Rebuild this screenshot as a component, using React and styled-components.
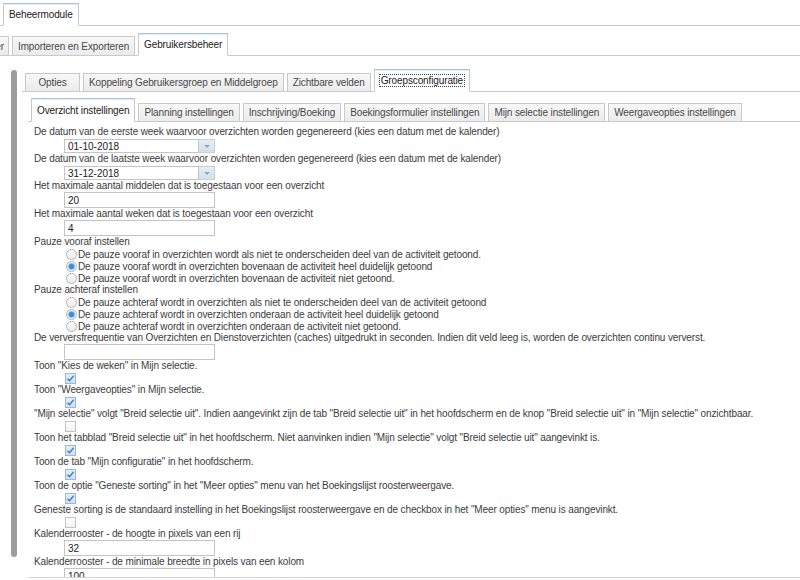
import React from 'react';
import styled, { createGlobalStyle } from 'styled-components';

const GlobalStyle = createGlobalStyle`
  body {
    margin: 0;
    background: #fff;
    font-family: "Liberation Sans", Arial, sans-serif;
    font-size: 10px;
    letter-spacing: -0.12px;
    color: #3c3c3c;
  }
`;

const Page = styled.div`
  width: 800px;
  height: 580px;
  overflow: hidden;
  background: #fff;
`;

const TabStrip = styled.div`
  display: flex;
  align-items: flex-end;
  gap: 3px;
  height: ${p => p.$height}px;
  padding-left: ${p => p.$indent || 0}px;
  margin-top: ${p => p.$top || 0}px;
  border-bottom: 1px solid #cacaca;
`;

const Tab = styled.div`
  box-sizing: border-box;
  display: flex;
  align-items: center;
  justify-content: center;
  flex-shrink: 0;
  height: ${p => p.$h}px;
  min-width: ${p => p.$min || 0}px;
  padding: 0 5px;
  border: 1px solid #c9c9c9;
  border-bottom: none;
  background: linear-gradient(#f8f8f8, #ebebeb);
  color: #484848;
  white-space: nowrap;

  ${p => p.$active && `
    background: #fff;
    color: #222;
    border-top-color: #a9c3df;
    box-shadow: inset 0 1px 0 #e2ecf7;
    border-bottom: 1px solid #fff;
    margin-bottom: -1px;
  `}
`;

// tab that scrolled off the left edge: only its last letter shows
const PartialTab = styled(Tab)`
  width: 10px;
  margin-left: -4px;
  padding: 0 4px 0 0;
  justify-content: flex-end;
  overflow: hidden;
`;

const Focus = styled.span`
  outline: 1px dotted #444;
  padding: 0 1px;
`;

const Body = styled.div`
  display: flex;
`;

const Rail = styled.div`
  width: 6px;
  height: 487px;
  margin: 14px 0 0 11px;
  border-radius: 3px;
  background: #9d9d9d;
  flex-shrink: 0;
`;

const Main = styled.div`
  flex: 1;
  margin: 13px 0 0 5px;
  min-width: 0;
`;

const Inner = styled.div`
  margin-left: 6px;
`;

const Panel = styled.div`
  box-sizing: border-box;
  height: 456px;
  padding: 4px 0 0 6px;
  border-bottom: 1px solid #d6d6d6;
  overflow: hidden;
`;

const Label = styled.div`
  line-height: 12px;
  height: 12px;
  white-space: nowrap;
`;

const Field = styled.div`
  display: flex;
  padding-left: 30px;
  margin-top: ${p => p.$top || 0}px;
`;

const TextBox = styled.input`
  box-sizing: border-box;
  width: ${p => p.$w || 151}px;
  height: ${p => p.$h || 16}px;
  margin: 0;
  padding: 0 3px;
  border: 1px solid #c4c4c4;
  border-radius: 0;
  font: 10px "Liberation Sans", Arial, sans-serif;
  color: #222;
  background: #fff;
  outline: none;
`;

const PickerButton = styled.div`
  box-sizing: border-box;
  width: 16px;
  height: 14px;
  border: 1px solid #c5d0db;
  border-left: none;
  background: linear-gradient(#e6edf4, #d6e0ea);
  display: flex;
  align-items: center;
  justify-content: center;

  &::after {
    content: "";
    border-left: 3px solid transparent;
    border-right: 3px solid transparent;
    border-top: 3px solid #8ea6bf;
  }
`;

const OptionRow = styled.div`
  display: flex;
  align-items: center;
  height: 12px;
  padding-left: ${p => p.$indent}px;
  white-space: nowrap;
`;

const Radio = styled.span`
  box-sizing: border-box;
  width: 11px;
  height: 11px;
  margin-right: 1px;
  border-radius: 50%;
  border: 1px solid #b4b4b4;
  background: ${p => p.$on
    ? 'radial-gradient(circle, #3f8fda 0 2.2px, #a9cbec 3.2px, #eef3f8 4px)'
    : 'linear-gradient(#fbfbfb, #ececec)'};
  flex-shrink: 0;
`;

const Check = styled.span`
  box-sizing: border-box;
  width: 11px;
  height: 11px;
  border: 1px solid ${p => p.$on ? '#9db8d4' : '#c4c4c4'};
  background: ${p => p.$on ? 'linear-gradient(#e3eef9, #cfe0f2)' : 'linear-gradient(#fff, #f1f1f1)'};
  display: flex;
  align-items: center;
  justify-content: center;
`;

const CheckMark = () => (
  <svg width="9" height="9" viewBox="0 0 9 9">
    <path d="M1.5 4.8 L3.6 6.8 L7.6 1.8" fill="none" stroke="#3d7fc4" strokeWidth="1.4" />
  </svg>
);

const rows = [
  { label: 'De datum van de eerste week waarvoor overzichten worden gegenereerd (kies een datum met de kalender)', date: '01-10-2018' },
  { label: 'De datum van de laatste week waarvoor overzichten worden gegenereerd (kies een datum met de kalender)', date: '31-12-2018' },
  { label: 'Het maximale aantal middelen dat is toegestaan voor een overzicht', text: '20' },
  { label: 'Het maximale aantal weken dat is toegestaan voor een overzicht', text: '4' },
  {
    label: 'Pauze vooraf instellen',
    radios: [
      'De pauze vooraf in overzichten wordt als niet te onderscheiden deel van de activiteit getoond.',
      'De pauze vooraf wordt in overzichten bovenaan de activiteit heel duidelijk getoond',
      'De pauze vooraf wordt in overzichten bovenaan de activiteit niet getoond.',
    ],
    picked: 1,
  },
  {
    label: 'Pauze achteraf instellen',
    radios: [
      'De pauze achteraf wordt in overzichten als niet te onderscheiden deel van de activiteit getoond',
      'De pauze achteraf wordt in overzichten onderaan de activiteit heel duidelijk getoond',
      'De pauze achteraf wordt in overzichten onderaan de activiteit niet getoond.',
    ],
    picked: 1,
  },
  { label: 'De verversfrequentie van Overzichten en Dienstoverzichten (caches) uitgedrukt in seconden. Indien dit veld leeg is, worden de overzichten continu ververst.', text: '' },
  { label: 'Toon "Kies de weken" in Mijn selectie.', check: true },
  { label: 'Toon "Weergaveopties" in Mijn selectie.', check: true },
  { label: '"Mijn selectie" volgt "Breid selectie uit". Indien aangevinkt zijn de tab "Breid selectie uit" in het hoofdscherm en de knop "Breid selectie uit" in "Mijn selectie" onzichtbaar.', check: false },
  { label: 'Toon het tabblad "Breid selectie uit" in het hoofdscherm. Niet aanvinken indien "Mijn selectie" volgt "Breid selectie uit" aangevinkt is.', check: true },
  { label: 'Toon de tab "Mijn configuratie" in het hoofdscherm.', check: true },
  { label: 'Toon de optie "Geneste sorting" in het "Meer opties" menu van het Boekingslijst roosterweergave.', check: true },
  { label: 'Geneste sorting is de standaard instelling in het Boekingslijst roosterweergave en de checkbox in het "Meer opties" menu is aangevinkt.', check: false },
  { label: 'Kalenderrooster - de hoogte in pixels van een rij', text: '32' },
  { label: 'Kalenderrooster - de minimale breedte in pixels van een kolom', text: '100' },
];

const Setting = ({ row }) => (
  <>
    <Label>{row.label}</Label>
    {row.date !== undefined &&
      <Field $top={1}>
        <TextBox $w={135} $h={14} defaultValue={row.date} readOnly />
        <PickerButton />
      </Field>}
    {row.text !== undefined &&
      <Field>
        <TextBox defaultValue={row.text} readOnly />
      </Field>}
    {row.radios && row.radios.map((r, i) =>
      <OptionRow key={i} $indent={32}>
        <Radio $on={i === row.picked} />
        {r}
      </OptionRow>
    )}
    {row.check !== undefined &&
      <OptionRow $indent={31}>
        <Check $on={row.check}>{row.check && <CheckMark />}</Check>
      </OptionRow>}
  </>
);

const subTabs = [
  'Overzicht instellingen',
  'Planning instellingen',
  'Inschrijving/Boeking',
  'Boekingsformulier instellingen',
  'Mijn selectie instellingen',
  'Weergaveopties instellingen',
];

export default () =>
  <Page>
    <GlobalStyle />
    <TabStrip $height={25} $indent={3}>
      <Tab $h={23} $active>Beheermodule</Tab>
    </TabStrip>
    <TabStrip $height={29} $indent={3}>
      <PartialTab $h={19}>Beheer</PartialTab>
      <Tab $h={19}>Importeren en Exporteren</Tab>
      <Tab $h={23} $active>Gebruikersbeheer</Tab>
    </TabStrip>
    <Body>
      <Rail />
      <Main>
        <TabStrip $height={22} $indent={3}>
          <Tab $h={18} $min={55}>Opties</Tab>
          <Tab $h={18}>Koppeling Gebruikersgroep en Middelgroep</Tab>
          <Tab $h={18}>Zichtbare velden</Tab>
          <Tab $h={23} $active><Focus>Groepsconfiguratie</Focus></Tab>
        </TabStrip>
        <Inner>
          <TabStrip $height={29} $indent={3}>
            {subTabs.map((t, i) =>
              <Tab key={t} $h={i === 0 ? 24 : 18} $active={i === 0}>{t}</Tab>
            )}
          </TabStrip>
          <Panel>
            {rows.map((row, i) => <Setting key={i} row={row} />)}
          </Panel>
        </Inner>
      </Main>
    </Body>
  </Page>;
